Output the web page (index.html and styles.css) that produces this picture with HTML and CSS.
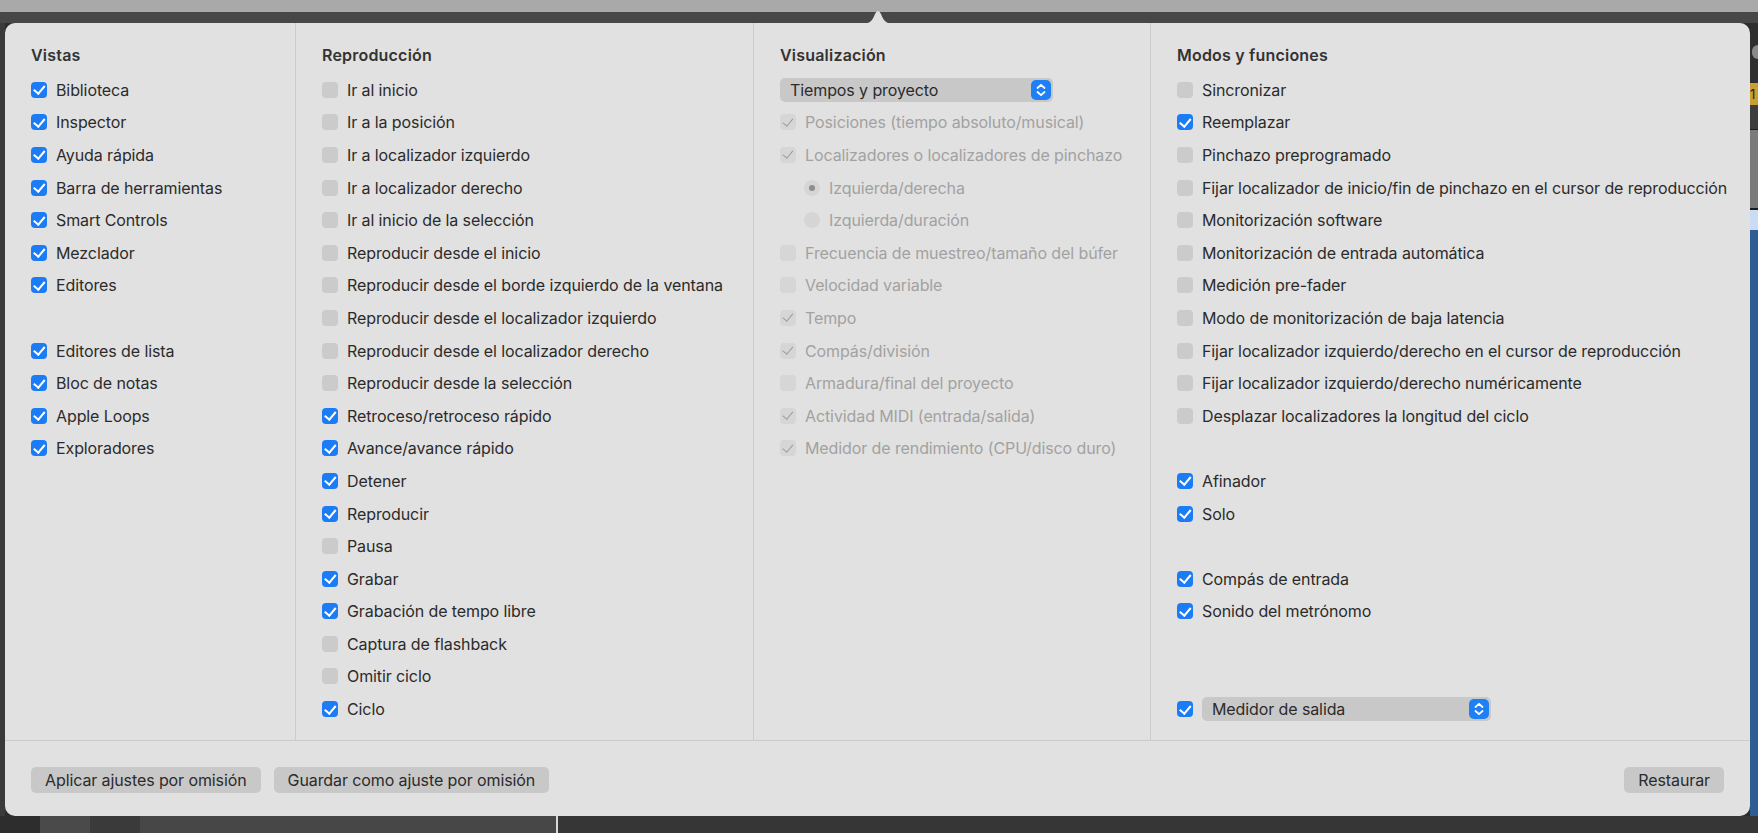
FILE: index.html
```html
<!DOCTYPE html>
<html lang="es">

<head>
    <meta charset="utf-8">
    <title>Personalizar barra de controles</title>
    <link rel="stylesheet" href="styles.css">
</head>

<body>
    <div class="app-top"></div>
    <div class="app-toolbar"></div>

    <div class="stage">
        <div class="edge-left"></div>

        <div class="popover">
            <svg class="popover-arrow" width="36" height="15" viewBox="0 0 36 15">
                <path d="M0 15 C9 15 12 13 15 5 Q18 -1 21 5 C24 13 27 15 36 15 Z" fill="#e1e1e1" />
            </svg>

            <div class="columns">
                <section class="column">
                    <h2>Vistas</h2>
                    <div class="row"><span class="box on"></span>Biblioteca</div>
                    <div class="row"><span class="box on"></span>Inspector</div>
                    <div class="row"><span class="box on"></span>Ayuda rápida</div>
                    <div class="row"><span class="box on"></span>Barra de herramientas</div>
                    <div class="row"><span class="box on"></span>Smart Controls</div>
                    <div class="row"><span class="box on"></span>Mezclador</div>
                    <div class="row"><span class="box on"></span>Editores</div>
                    <div class="row blank"></div>
                    <div class="row"><span class="box on"></span>Editores de lista</div>
                    <div class="row"><span class="box on"></span>Bloc de notas</div>
                    <div class="row"><span class="box on"></span>Apple Loops</div>
                    <div class="row"><span class="box on"></span>Exploradores</div>
                </section>

                <section class="column">
                    <h2>Reproducción</h2>
                    <div class="row"><span class="box"></span>Ir al inicio</div>
                    <div class="row"><span class="box"></span>Ir a la posición</div>
                    <div class="row"><span class="box"></span>Ir a localizador izquierdo</div>
                    <div class="row"><span class="box"></span>Ir a localizador derecho</div>
                    <div class="row"><span class="box"></span>Ir al inicio de la selección</div>
                    <div class="row"><span class="box"></span>Reproducir desde el inicio</div>
                    <div class="row"><span class="box"></span>Reproducir desde el borde izquierdo de la ventana</div>
                    <div class="row"><span class="box"></span>Reproducir desde el localizador izquierdo</div>
                    <div class="row"><span class="box"></span>Reproducir desde el localizador derecho</div>
                    <div class="row"><span class="box"></span>Reproducir desde la selección</div>
                    <div class="row"><span class="box on"></span>Retroceso/retroceso rápido</div>
                    <div class="row"><span class="box on"></span>Avance/avance rápido</div>
                    <div class="row"><span class="box on"></span>Detener</div>
                    <div class="row"><span class="box on"></span>Reproducir</div>
                    <div class="row"><span class="box"></span>Pausa</div>
                    <div class="row"><span class="box on"></span>Grabar</div>
                    <div class="row"><span class="box on"></span>Grabación de tempo libre</div>
                    <div class="row"><span class="box"></span>Captura de flashback</div>
                    <div class="row"><span class="box"></span>Omitir ciclo</div>
                    <div class="row"><span class="box on"></span>Ciclo</div>
                </section>

                <section class="column">
                    <h2>Visualización</h2>
                    <div class="row">
                        <div class="popup popup-display">
                            <span>Tiempos y proyecto</span>
                            <svg class="stepper" width="20" height="20" viewBox="0 0 20 20">
                                <rect width="20" height="20" rx="5" fill="#1f7ff5" />
                                <path d="M6.5 8 L10 4.8 L13.5 8 M6.5 12 L10 15.2 L13.5 12" stroke="#fff" stroke-width="1.8" fill="none" stroke-linecap="round" stroke-linejoin="round" />
                            </svg>
                        </div>
                    </div>
                    <div class="row dim"><span class="box on"></span>Posiciones (tiempo absoluto/musical)</div>
                    <div class="row dim"><span class="box on"></span>Localizadores o localizadores de pinchazo</div>
                    <div class="row dim sub"><span class="radio on"></span>Izquierda/derecha</div>
                    <div class="row dim sub"><span class="radio"></span>Izquierda/duración</div>
                    <div class="row dim"><span class="box"></span>Frecuencia de muestreo/tamaño del búfer</div>
                    <div class="row dim"><span class="box"></span>Velocidad variable</div>
                    <div class="row dim"><span class="box on"></span>Tempo</div>
                    <div class="row dim"><span class="box on"></span>Compás/división</div>
                    <div class="row dim"><span class="box"></span>Armadura/final del proyecto</div>
                    <div class="row dim"><span class="box on"></span>Actividad MIDI (entrada/salida)</div>
                    <div class="row dim"><span class="box on"></span>Medidor de rendimiento (CPU/disco duro)</div>
                </section>

                <section class="column">
                    <h2>Modos y funciones</h2>
                    <div class="row"><span class="box"></span>Sincronizar</div>
                    <div class="row"><span class="box on"></span>Reemplazar</div>
                    <div class="row"><span class="box"></span>Pinchazo preprogramado</div>
                    <div class="row"><span class="box"></span>Fijar localizador de inicio/fin de pinchazo en el cursor de reproducción</div>
                    <div class="row"><span class="box"></span>Monitorización software</div>
                    <div class="row"><span class="box"></span>Monitorización de entrada automática</div>
                    <div class="row"><span class="box"></span>Medición pre-fader</div>
                    <div class="row"><span class="box"></span>Modo de monitorización de baja latencia</div>
                    <div class="row"><span class="box"></span>Fijar localizador izquierdo/derecho en el cursor de reproducción</div>
                    <div class="row"><span class="box"></span>Fijar localizador izquierdo/derecho numéricamente</div>
                    <div class="row"><span class="box"></span>Desplazar localizadores la longitud del ciclo</div>
                    <div class="row blank"></div>
                    <div class="row"><span class="box on"></span>Afinador</div>
                    <div class="row"><span class="box on"></span>Solo</div>
                    <div class="row blank"></div>
                    <div class="row"><span class="box on"></span>Compás de entrada</div>
                    <div class="row"><span class="box on"></span>Sonido del metrónomo</div>
                    <div class="row blank"></div>
                    <div class="row blank"></div>
                    <div class="row">
                        <span class="box on"></span>
                        <div class="popup popup-meter">
                            <span>Medidor de salida</span>
                            <svg class="stepper" width="20" height="20" viewBox="0 0 20 20">
                                <rect width="20" height="20" rx="5" fill="#1f7ff5" />
                                <path d="M6.5 8 L10 4.8 L13.5 8 M6.5 12 L10 15.2 L13.5 12" stroke="#fff" stroke-width="1.8" fill="none" stroke-linecap="round" stroke-linejoin="round" />
                            </svg>
                        </div>
                    </div>
                </section>
            </div>

            <footer class="popover-footer">
                <button>Aplicar ajustes por omisión</button>
                <button>Guardar como ajuste por omisión</button>
                <button class="push-right">Restaurar</button>
            </footer>
        </div>

        <div class="edge-right">
            <div class="er-knob"></div>
            <div class="er-yellow">1</div>
            <div class="er-dark"></div>
            <div class="er-wave"></div>
            <div class="er-light"></div>
            <div class="er-blue"></div>
        </div>
    </div>

    <div class="app-bottom">
        <div class="ab-a"></div>
        <div class="ab-b"></div>
        <div class="ab-c"></div>
        <div class="ab-d"></div>
        <div class="ab-line"></div>
        <div class="ab-e"></div>
    </div>
</body>

</html>
```

FILE: styles.css
```css
* {
    box-sizing: border-box;
    margin: 0;
    padding: 0;
}

body {
    width: 1758px;
    height: 833px;
    overflow: hidden;
    background-color: #2c2c2c;
    font-family: "Inter", "Noto Sans", sans-serif;
    font-size: 16px;
    color: #2b2b2b;
}

.app-top {
    height: 12px;
    background-color: #a9a9a9;
}

.app-toolbar {
    height: 11px;
    background-color: #474747;
}

.stage {
    display: flex;
    height: 793px;
}

.edge-left {
    width: 5px;
    background-color: #3a3a3a;
}

.popover {
    position: relative;
    width: 1745px;
    background-color: #e1e1e1;
    border-radius: 10px;
    display: flex;
    flex-direction: column;
}

.popover-arrow {
    position: absolute;
    top: -14px;
    left: 855px;
}

.columns {
    display: grid;
    grid-template-columns: 291px 458px 397px 1fr;
    height: 718px;
    border-bottom: 1px solid #cccccc;
}

.column {
    padding: 22.5px 0 0 26px;
    border-right: 1px solid #cccccc;
}

.column:last-child {
    border-right: none;
}

.column h2 {
    font-size: 16px;
    font-weight: 600;
    letter-spacing: 0.2px;
    color: #333333;
    line-height: 18px;
    margin-bottom: 10px;
}

.row {
    display: flex;
    align-items: center;
    gap: 9px;
    height: 32.6px;
    white-space: nowrap;
    letter-spacing: -0.1px;
}

.row.dim {
    color: #a2a2a2;
}

.row.sub {
    padding-left: 24px;
}

.box {
    position: relative;
    flex: none;
    width: 16px;
    height: 16px;
    border-radius: 4px;
    background-color: #cbcbcb;
}

.box.on {
    background-color: #1b7cf6;
}

.box.on::after {
    content: "";
    position: absolute;
    left: 5px;
    top: 1.5px;
    width: 4.5px;
    height: 8.5px;
    border: solid #ffffff;
    border-width: 0 2.6px 2.6px 0;
    transform: rotate(40deg);
}

.dim .box {
    background-color: #d6d6d6;
}

.dim .box.on::after {
    border-color: #9c9c9c;
    border-width: 0 1.8px 1.8px 0;
}

.radio {
    flex: none;
    width: 16px;
    height: 16px;
    border-radius: 50%;
    background-color: #d5d5d5;
    display: flex;
    align-items: center;
    justify-content: center;
}

.radio.on::after {
    content: "";
    width: 6px;
    height: 6px;
    border-radius: 50%;
    background-color: #8e8e8e;
}

.popup {
    display: flex;
    align-items: center;
    justify-content: space-between;
    height: 24px;
    padding: 0 2px 0 10px;
    border-radius: 5px;
    background-color: #c8c8c8;
    color: #2b2b2b;
}

.popup-display {
    width: 273px;
}

.popup-meter {
    width: 289px;
}

.stepper {
    display: block;
}

.popover-footer {
    flex: 1;
    display: flex;
    align-items: flex-start;
    gap: 13px;
    padding: 26px 26px 0 26px;
}

.popover-footer button {
    height: 26px;
    padding: 0 14px;
    border: none;
    border-radius: 5px;
    background-color: #c8c8c8;
    font-family: inherit;
    font-size: 16px;
    letter-spacing: -0.1px;
    color: #2b2b2b;
}

.popover-footer .push-right {
    margin-left: auto;
}

.edge-right {
    width: 8px;
    display: flex;
    flex-direction: column;
    background-color: #2f2f2f;
}

.er-knob {
    height: 14px;
    margin: 22px 0 24px 2px;
    border-radius: 7px 0 0 7px;
    background-color: #8a8a8a;
}

.er-yellow {
    height: 22px;
    background-color: #c99f2f;
    color: #222;
    font-size: 13px;
    line-height: 22px;
    overflow: hidden;
}

.er-dark {
    height: 25px;
    background-color: #3d3d3d;
    border-bottom: 1px solid #1c1c1c;
}

.er-wave {
    height: 80px;
    background-color: #7a7a7a;
    border-bottom: 2px solid #1a1a1a;
}

.er-light {
    height: 20px;
    background-color: #c9dcf3;
}

.er-blue {
    flex: 1;
    background-color: #2d5d93;
}

.app-bottom {
    display: flex;
    height: 17px;
}

.ab-a {
    width: 40px;
    background-color: #2d2d2d;
}

.ab-b {
    width: 50px;
    background-color: #4a4a4a;
}

.ab-c {
    width: 50px;
    background-color: #3a3a3a;
}

.ab-d {
    width: 416px;
    background-color: #474747;
}

.ab-line {
    width: 2px;
    background-color: #d8d8d8;
}

.ab-e {
    flex: 1;
    background-color: #363636;
}
```
